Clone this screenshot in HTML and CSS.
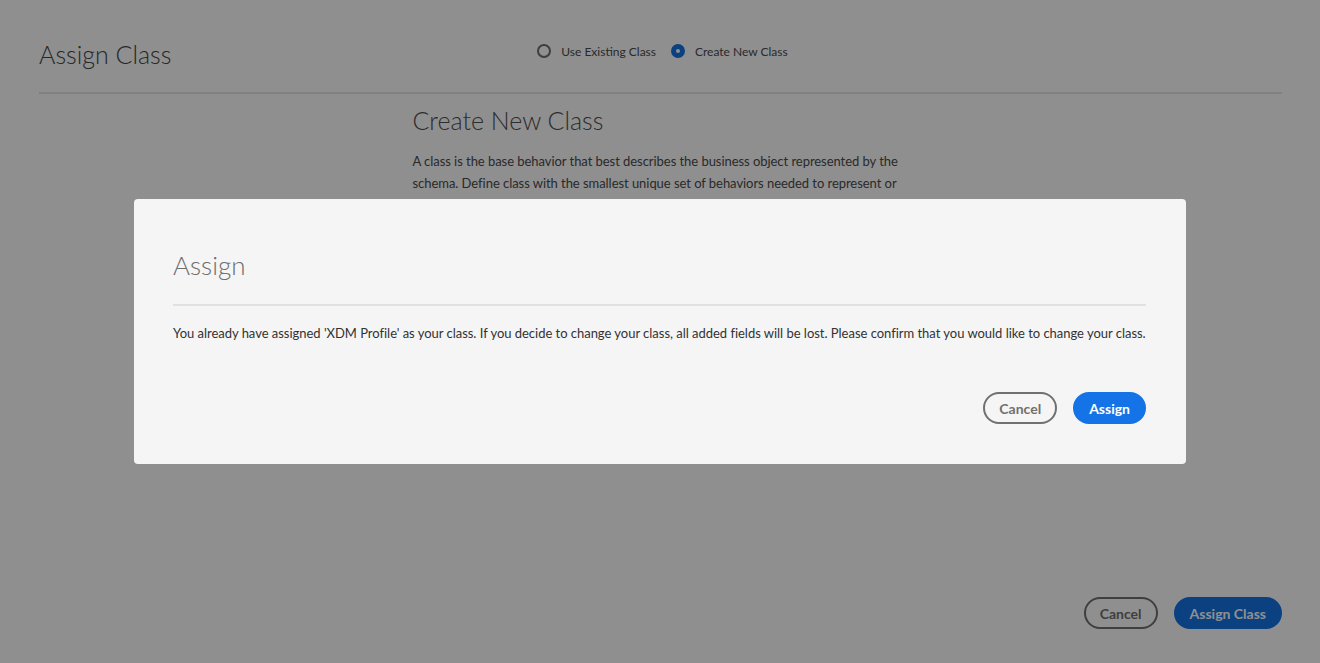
FILE: index.html
```html
<!DOCTYPE html>
<html lang="en">
<head>
<meta charset="utf-8">
<title>Assign Class</title>
<link rel="stylesheet" href="styles.css">
</head>
<body>
<div class="page">
  <header class="page-header">
    <h1 class="page-title">Assign Class</h1>
    <div class="radio-group">
      <label class="radio"><span class="radio-circle"></span><span class="radio-label">Use Existing Class</span></label>
      <label class="radio"><span class="radio-circle checked"></span><span class="radio-label">Create New Class</span></label>
    </div>
    <div></div>
  </header>
  <main class="content">
    <h2 class="content-title">Create New Class</h2>
    <p class="content-text">A class is the base behavior that best describes the business object represented by the schema. Define class with the smallest unique set of behaviors needed to represent or validate the data.</p>
  </main>
  <footer class="page-footer">
    <button class="btn btn-secondary">Cancel</button>
    <button class="btn btn-primary">Assign Class</button>
  </footer>
</div>
<div class="underlay">
  <div class="dialog" role="dialog">
    <h3 class="dialog-title">Assign</h3>
    <p class="dialog-text">You already have assigned 'XDM Profile' as your class. If you decide to change your class, all added fields will be lost. Please confirm that you would like to change your class.</p>
    <div class="dialog-actions">
      <button class="btn btn-secondary">Cancel</button>
      <button class="btn btn-primary">Assign</button>
    </div>
  </div>
</div>
</body>
</html>
```

FILE: styles.css
```css
* { box-sizing: border-box; }
html, body { margin: 0; height: 100%; }
body {
  font-family: Lato, "Open Sans", sans-serif;
  background: #ffffff;
  color: #4b4b4b;
}
.page {
  min-height: 100vh;
  display: flex;
  flex-direction: column;
  padding: 0 38px 34px 39px;
}
.page-header {
  display: grid;
  grid-template-columns: 1fr auto 1fr;
  align-items: start;
  height: 94px;
  border-bottom: 2px solid #e6e6e6;
  padding-top: 37px;
}
.page-title {
  margin: 0;
  font-size: 25px;
  line-height: 34px;
  font-weight: 300;
  color: #474747;
}
.radio-group {
  display: flex;
  gap: 15px;
  margin-top: 4px;
  padding-left: 4px;
}
.radio {
  display: flex;
  align-items: center;
  gap: 10px;
  height: 20px;
  font-size: 12px;
  color: #4b4b4b;
}
.radio-circle {
  width: 14px;
  height: 14px;
  border-radius: 50%;
  border: 2px solid #6e6e6e;
  background: #fff;
}
.radio-circle.checked {
  border: 5px solid #1473e6;
}
.content {
  width: 496px;
  margin: 0 auto;
  padding-top: 9px;
}
.content-title {
  margin: 0;
  font-size: 25px;
  line-height: 34px;
  font-weight: 300;
  color: #505050;
}
.content-text {
  margin: 13px 0 0;
  font-size: 13px;
  line-height: 22px;
  letter-spacing: -0.05px;
  color: #4b4b4b;
}
.page-footer {
  margin-top: auto;
  display: flex;
  justify-content: flex-end;
  gap: 16px;
}
.btn {
  height: 32px;
  border-radius: 16px;
  font-family: inherit;
  font-size: 14px;
  font-weight: 700;
  padding: 0 14px;
  cursor: pointer;
}
.btn-secondary {
  background: transparent;
  border: 2px solid #707070;
  color: #707070;
}
.btn-primary {
  background: #1473e6;
  border: 2px solid #1473e6;
  color: #ffffff;
}
.underlay {
  position: fixed;
  inset: 0;
  background: rgba(0, 0, 0, 0.44);
  display: flex;
  align-items: center;
  justify-content: center;
}
.dialog {
  width: 1052px;
  background: #f5f5f5;
  border-radius: 4px;
  padding: 49px 40px 40px 39px;
}
.dialog-title {
  margin: 0;
  font-size: 26px;
  line-height: 34px;
  font-weight: 300;
  color: #6e6e6e;
  padding-bottom: 22px;
  border-bottom: 2px solid #e1e1e1;
}
.dialog-text {
  margin: 17px 0 0;
  font-size: 13px;
  line-height: 20px;
  letter-spacing: -0.025px;
  color: #323232;
  white-space: nowrap;
}
.dialog-actions {
  display: flex;
  justify-content: flex-end;
  gap: 16px;
  margin-top: 49px;
}
```
